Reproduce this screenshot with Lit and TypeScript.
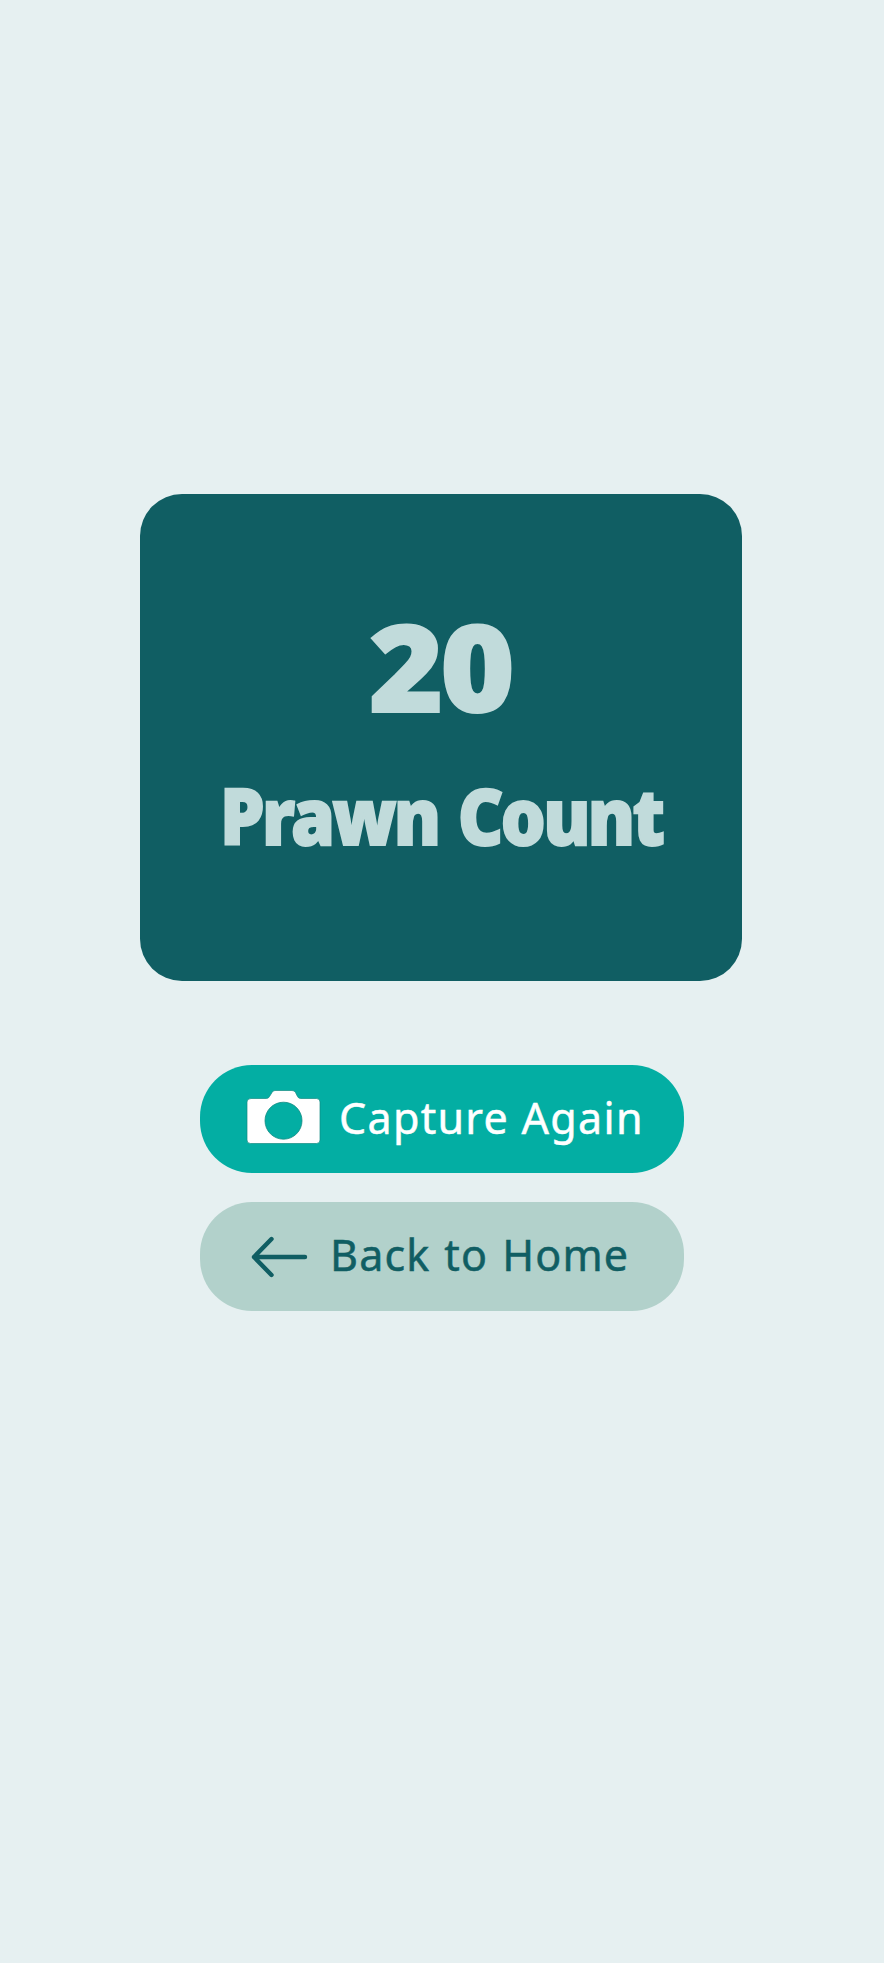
import { LitElement, html, css } from "lit";
import { customElement, property } from "lit/decorators.js";

@customElement("app-root")
export class AppRoot extends LitElement {
  @property({ type: Number }) count = 20;

  static styles = css`
    :host {
      display: block;
    }
    .screen {
      box-sizing: border-box;
      height: 1963px;
      padding-top: 493.5px;
      background: #e6f0f1;
      display: flex;
      flex-direction: column;
      align-items: center;
    }
    .card {
      box-sizing: border-box;
      width: 602.5px;
      height: 487.5px;
      margin-right: 2.5px;
      margin-bottom: 83.5px;
      padding-top: 107px;
      border-radius: 42px;
      background: #105e63;
      color: #c1dbdb;
      display: flex;
      flex-direction: column;
      align-items: center;
      font-family: "Noto Sans", sans-serif;
      font-weight: 900;
      white-space: nowrap;
    }
    .count {
      font-size: 120px;
      line-height: 130px;
      height: 169px;
      letter-spacing: -3px;
      -webkit-text-stroke: 2px #c1dbdb;
      transform: scaleX(1.06);
    }
    .label {
      font-size: 78px;
      line-height: 90px;
      letter-spacing: -3px;
      word-spacing: 4px;
      -webkit-text-stroke: 2px #c1dbdb;
      transform: scaleX(0.906);
    }
    .actions {
      display: flex;
      flex-direction: column;
      gap: 29px;
    }
    button {
      box-sizing: border-box;
      width: 484px;
      height: 108.5px;
      padding: 0;
      border: 0;
      border-radius: 52px;
      display: flex;
      align-items: center;
      font: 400 43px/54px "Noto Sans", sans-serif;
      white-space: nowrap;
      -webkit-text-stroke: 0.5px currentColor;
    }
    .capture {
      background: #03aea3;
      color: #fff;
      padding-left: 46px;
      padding-bottom: 2px;
      gap: 17px;
      letter-spacing: 1.3px;
    }
    .capture svg {
      margin-bottom: 2px;
    }
    .back {
      background: #b2d1cb;
      color: #105e63;
      padding-left: 51px;
      gap: 21px;
      letter-spacing: 1.2px;
      word-spacing: 1.5px;
    }
    .back span {
      margin-bottom: 2px;
    }
    svg {
      display: block;
      flex: none;
    }
  `;

  render() {
    return html`
      <main class="screen">
        <section class="card">
          <div class="count">${this.count}</div>
          <div class="label">Prawn Count</div>
        </section>
        <div class="actions">
          <button class="capture">
            <svg width="76" height="56" viewBox="0 0 76 56">
              <path
                d="M5 9.500H20.500Q22.500 9.500 23.500 7.500L26 3.500Q27 1.500 29 1.500H46Q48.500 1.500 49.500 3.500L51.500 7.500Q52.500 9.500 54.500 9.500H70.500Q74 9.500 74 13V51Q74 54.500 70.500 54.500H4.500Q1 54.500 1 51V13Q1 9.500 5 9.500Z"
                fill="#fff"
                stroke="#138b83"
                stroke-width=".7"
              />
              <circle cx="37.500" cy="31.700" r="18.500" fill="#03aea3" stroke="#138b83" stroke-width=".8" />
            </svg>
            <span>Capture Again</span>
          </button>
          <button class="back">
            <svg width="58" height="44" viewBox="0 0 58 44" fill="none" stroke="#105e63" stroke-width="4.400" stroke-linecap="round" stroke-linejoin="round">
              <path d="M20.500 5 3 23 20.500 41M3 23H54" />
            </svg>
            <span>Back to Home</span>
          </button>
        </div>
      </main>
    `;
  }
}
